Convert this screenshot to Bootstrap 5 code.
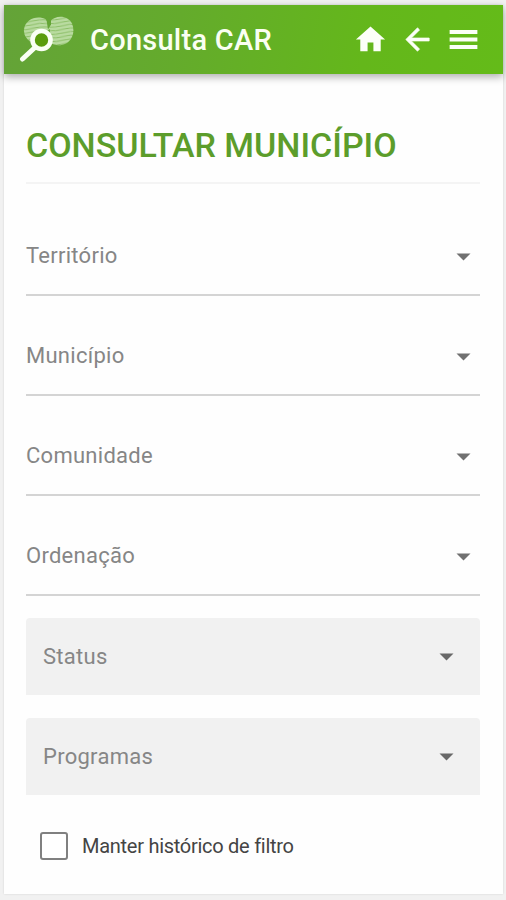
<!DOCTYPE html>
<html lang="pt-BR">
<head>
<meta charset="utf-8">
<meta name="viewport" content="width=device-width, initial-scale=1">
<title>Consulta CAR</title>
<link href="https://cdn.jsdelivr.net/npm/bootstrap@5.3.0/dist/css/bootstrap.min.css" rel="stylesheet">
<style>
body{background:#f1f1f1;font-family:Roboto,sans-serif;height:900px;overflow:hidden;padding:5px 3px 6px 4px}
.screen{background:#fefefe;height:889px;box-shadow:0 0 2px rgba(0,0,0,.12)}
.topbar{height:69px;background:linear-gradient(100deg,#64a338 0%,#64ab2c 35%,#64b71b 72%,#64bb19 100%);box-shadow:0 3px 8px rgba(0,0,0,.32);padding:0 21px 0 15px}
.brand-name{font-size:29px;font-weight:500;line-height:40px;margin-left:15px;letter-spacing:.25px;color:#fafff2}
.act{border:0;background:none;padding:0;line-height:0;color:#fcfff8}
.act-back{margin:0 10px 0 12px}
.content{padding:0 23px 0 22px}
.page-title{font-size:34px;font-weight:500;line-height:40px;color:#5c9d2b;padding:51px 0 17px;margin:0;border-bottom:2px solid #f4f4f4;height:110px;white-space:nowrap}
.field{width:100%;border:0;background:none;color:#868686;font-size:22px;letter-spacing:.27px;line-height:30px;text-align:left}
.lined{height:100px;border-bottom:2px solid #d4d4d4;padding:22px 9px 0 0}
.lined svg{margin-top:2px}
.first{margin-top:12px}
.filled-group{padding-top:22px;gap:23px}
.filled{height:77px;background:#f1f1f1;border-radius:4px 4px 0 0;padding:0 26px 0 17px}
.keep{font-size:20px;line-height:28px;letter-spacing:-.27px;color:#444;padding-left:14px;gap:14px;height:102px}
.keep input{appearance:none;width:28px;height:28px;border:2px solid #808080;border-radius:3px;background:#fff;margin:0}
</style>
<script src="https://cdn.jsdelivr.net/npm/bootstrap@5.3.0/dist/js/bootstrap.bundle.min.js"></script>
</head>
<body>
<div class="screen">
  <header class="topbar d-flex align-items-center position-relative">
    <svg width="56" height="50" viewBox="19 14.500 56 50" aria-hidden="true">
      <defs><pattern id="grain" width="30" height="3.6" patternUnits="userSpaceOnUse" patternTransform="rotate(-5)"><rect width="30" height="3.6" fill="#b9dba0"/><path d="M0 1.8q7.500-1.500 15 0t15 0" fill="none" stroke="#88bc62" stroke-width=".9"/></pattern></defs>
      <path d="M46 19C37 14 25 19 24 29c-.5 5 2 9 6 12l21-13z" fill="url(#grain)"/>
      <path d="M50 21C56 14 68 15 72 23c3 7 1 16-6 20-6 3-12 2-16-1z" fill="url(#grain)"/>
      <path d="M46 16l5 0 0 8-3 5z" fill="#64a535"/>
      <path d="M36 46L22.500 58.500" stroke="#fafff5" stroke-width="5" stroke-linecap="round"/>
      <circle cx="41.500" cy="39.500" r="9" fill="#5a9c0c" stroke="#fafff5" stroke-width="4.600"/>
    </svg>
    <span class="brand-name">Consulta CAR</span>
    <nav class="d-flex align-items-center ms-auto">
      <button class="act" aria-label="Início"><svg width="35" height="35" viewBox="0 0 24 24" fill="currentColor"><path d="M10 20v-6h4v6h5v-8h3L12 3 2 12h3v8z"/></svg></button>
      <button class="act act-back" aria-label="Voltar"><svg width="35" height="35" viewBox="0 0 24 24" fill="currentColor"><path d="M20 11H7.830l5.590-5.590L12 4l-8 8 8 8 1.410-1.410L7.830 13H20z" stroke="currentColor" stroke-width=".5"/></svg></button>
      <button class="act" aria-label="Menu"><svg width="37" height="37" viewBox="0 0 24 24" fill="currentColor"><path d="M3 18.100h18v-2.600H3zm0-4.800h18v-2.600H3zM3 5.900v2.600h18V5.900z"/></svg></button>
    </nav>
  </header>
  <main class="content">
    <h1 class="page-title">CONSULTAR MUNICÍPIO</h1>
    <button class="field lined first d-flex align-items-center justify-content-between"><span>Território</span><svg width="15" height="8" viewBox="0 0 15 8"><path d="M.5.500h14L7.500 7.500z" fill="#707070"/></svg></button>
    <button class="field lined d-flex align-items-center justify-content-between"><span>Município</span><svg width="15" height="8" viewBox="0 0 15 8"><path d="M.5.500h14L7.500 7.500z" fill="#707070"/></svg></button>
    <button class="field lined d-flex align-items-center justify-content-between"><span>Comunidade</span><svg width="15" height="8" viewBox="0 0 15 8"><path d="M.5.500h14L7.500 7.500z" fill="#707070"/></svg></button>
    <button class="field lined d-flex align-items-center justify-content-between"><span>Ordenação</span><svg width="15" height="8" viewBox="0 0 15 8"><path d="M.5.500h14L7.500 7.500z" fill="#707070"/></svg></button>
    <div class="d-grid filled-group">
      <button class="field filled d-flex align-items-center justify-content-between"><span>Status</span><svg width="15" height="8" viewBox="0 0 15 8"><path d="M.5.500h14L7.500 7.500z" fill="#686868"/></svg></button>
      <button class="field filled d-flex align-items-center justify-content-between"><span>Programas</span><svg width="15" height="8" viewBox="0 0 15 8"><path d="M.5.500h14L7.500 7.500z" fill="#686868"/></svg></button>
    </div>
    <label class="keep d-flex align-items-center"><input type="checkbox"><span>Manter histórico de filtro</span></label>
  </main>
</div>
</body>
</html>
